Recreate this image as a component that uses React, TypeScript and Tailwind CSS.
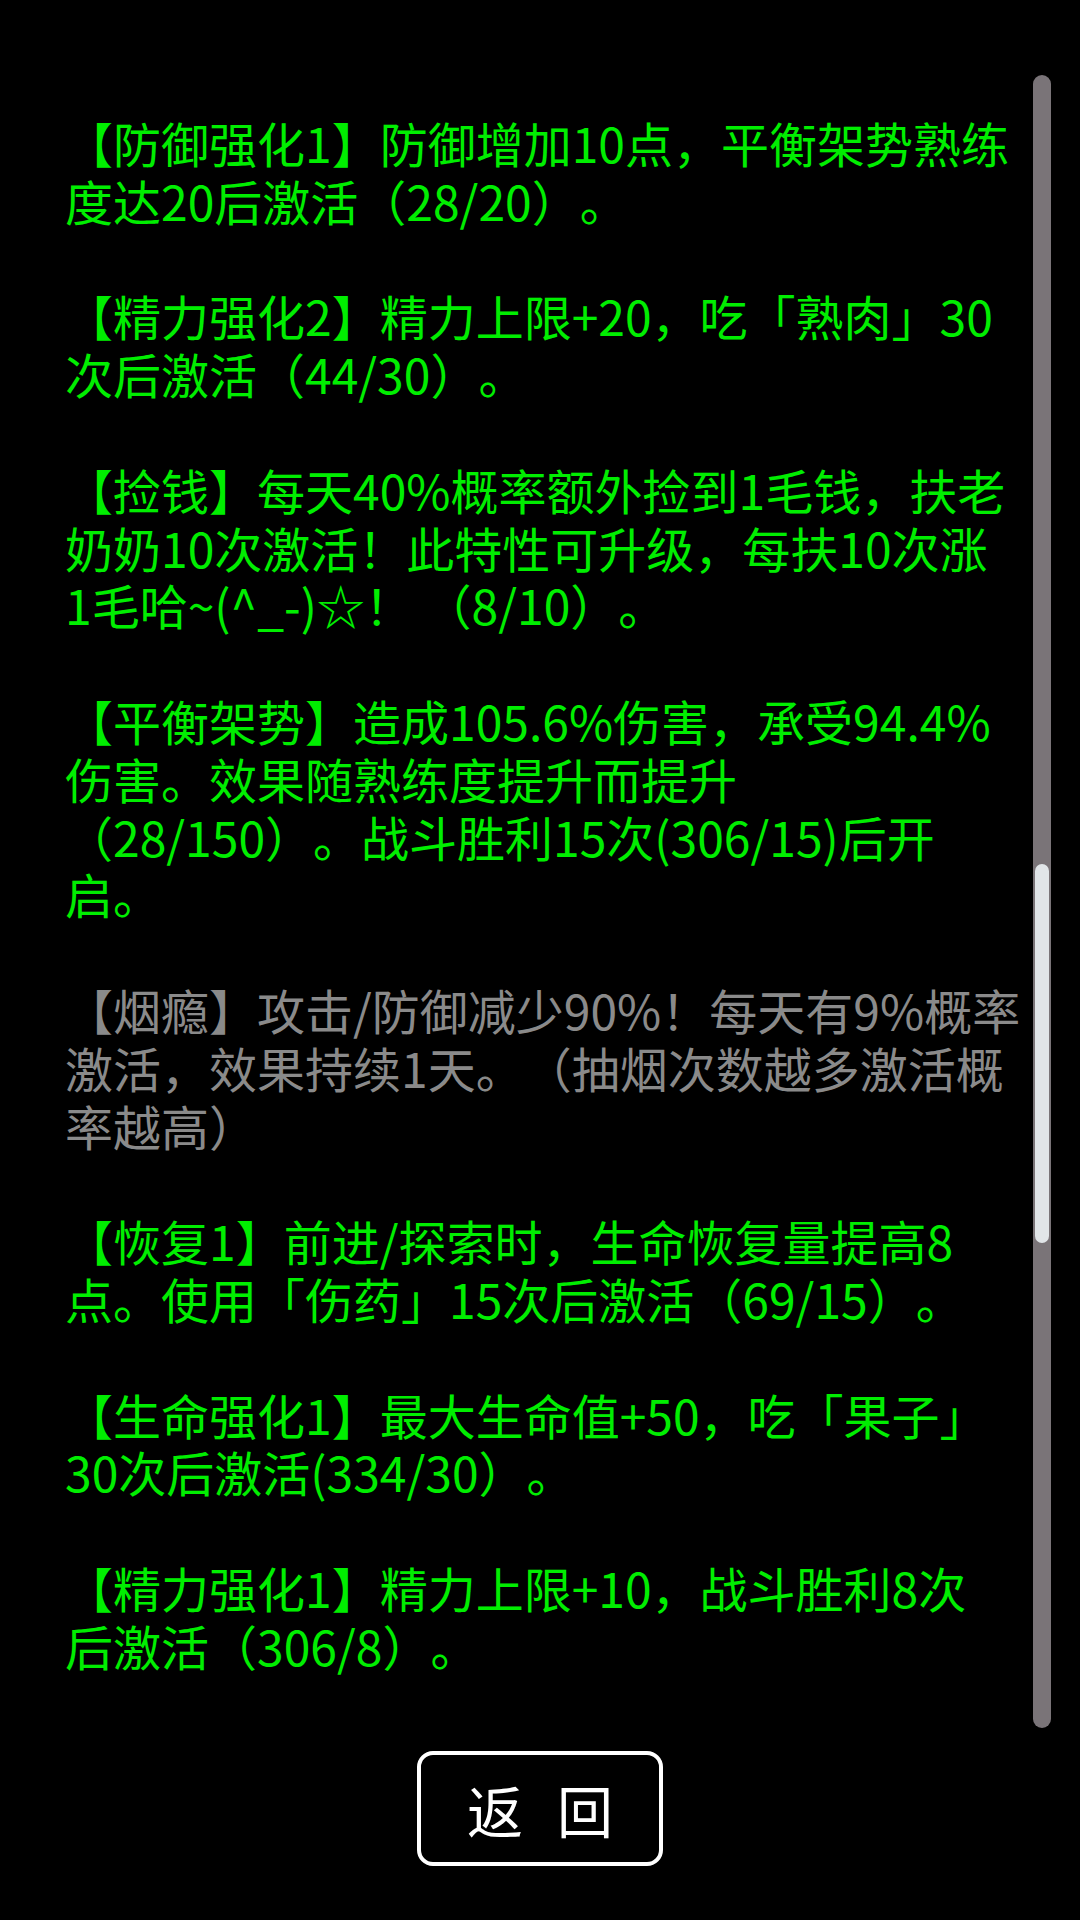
import React from 'react';

type Entry = {
    lines: string[];
    muted?: boolean;
};

const entries: Entry[] = [
    { lines: ['【防御强化1】防御增加10点，平衡架势熟练', '度达20后激活（28/20）。'] },
    { lines: ['【精力强化2】精力上限+20，吃「熟肉」30', '次后激活（44/30）。'] },
    {
        lines: [
            '【捡钱】每天40%概率额外捡到1毛钱，扶老',
            '奶奶10次激活！此特性可升级，每扶10次涨',
            '1毛哈~(^_-)☆！ （8/10）。',
        ],
    },
    {
        lines: [
            '【平衡架势】造成105.6%伤害，承受94.4%',
            '伤害。效果随熟练度提升而提升',
            '（28/150）。战斗胜利15次(306/15)后开',
            '启。',
        ],
    },
    {
        muted: true,
        lines: [
            '【烟瘾】攻击/防御减少90%！每天有9%概率',
            '激活，效果持续1天。（抽烟次数越多激活概',
            '率越高）',
        ],
    },
    { lines: ['【恢复1】前进/探索时，生命恢复量提高8', '点。使用「伤药」15次后激活（69/15）。'] },
    { lines: ['【生命强化1】最大生命值+50，吃「果子」', '30次后激活(334/30）。'] },
    { lines: ['【精力强化1】精力上限+10，战斗胜利8次', '后激活（306/8）。'] },
];

const App: React.FC = () => {
    return (
        <div
            className="flex h-[1920px] w-[1080px] flex-col overflow-hidden bg-black [text-spacing-trim:space-all]"
            style={{ fontFamily: '"Noto Sans CJK SC", "Noto Sans", sans-serif' }}
        >
            {/* trait list with scrollbar */}
            <div className="mt-[75px] flex h-[1653px] flex-row">
                <div className="flex flex-1 flex-col gap-[57.8px] pl-[65px] pt-[39px] text-[48px] leading-[57.8px]">
                    {entries.map((entry, i) => (
                        <div key={i} className={entry.muted ? 'text-[#8a8a8a]' : 'text-[#00ee00]'}>
                            {entry.lines.map((line, j) => (
                                <div key={j} className="whitespace-nowrap">
                                    {line}
                                </div>
                            ))}
                        </div>
                    ))}
                </div>

                <div className="mr-[29px] flex h-full w-[18px] flex-col rounded-full bg-[#7a7478]">
                    <div className="h-[789px] shrink-0" />
                    <div className="mx-[2px] h-[379px] rounded-full bg-[#e1e5e8]" />
                </div>
            </div>

            {/* back button */}
            <div className="mt-[23px] flex justify-center">
                <button className="flex h-[115px] w-[246px] items-center justify-center gap-[34px] rounded-[16px] border-[4px] border-white text-[56px] leading-none text-white">
                    <span>返</span>
                    <span>回</span>
                </button>
            </div>
        </div>
    );
};

export default App;
